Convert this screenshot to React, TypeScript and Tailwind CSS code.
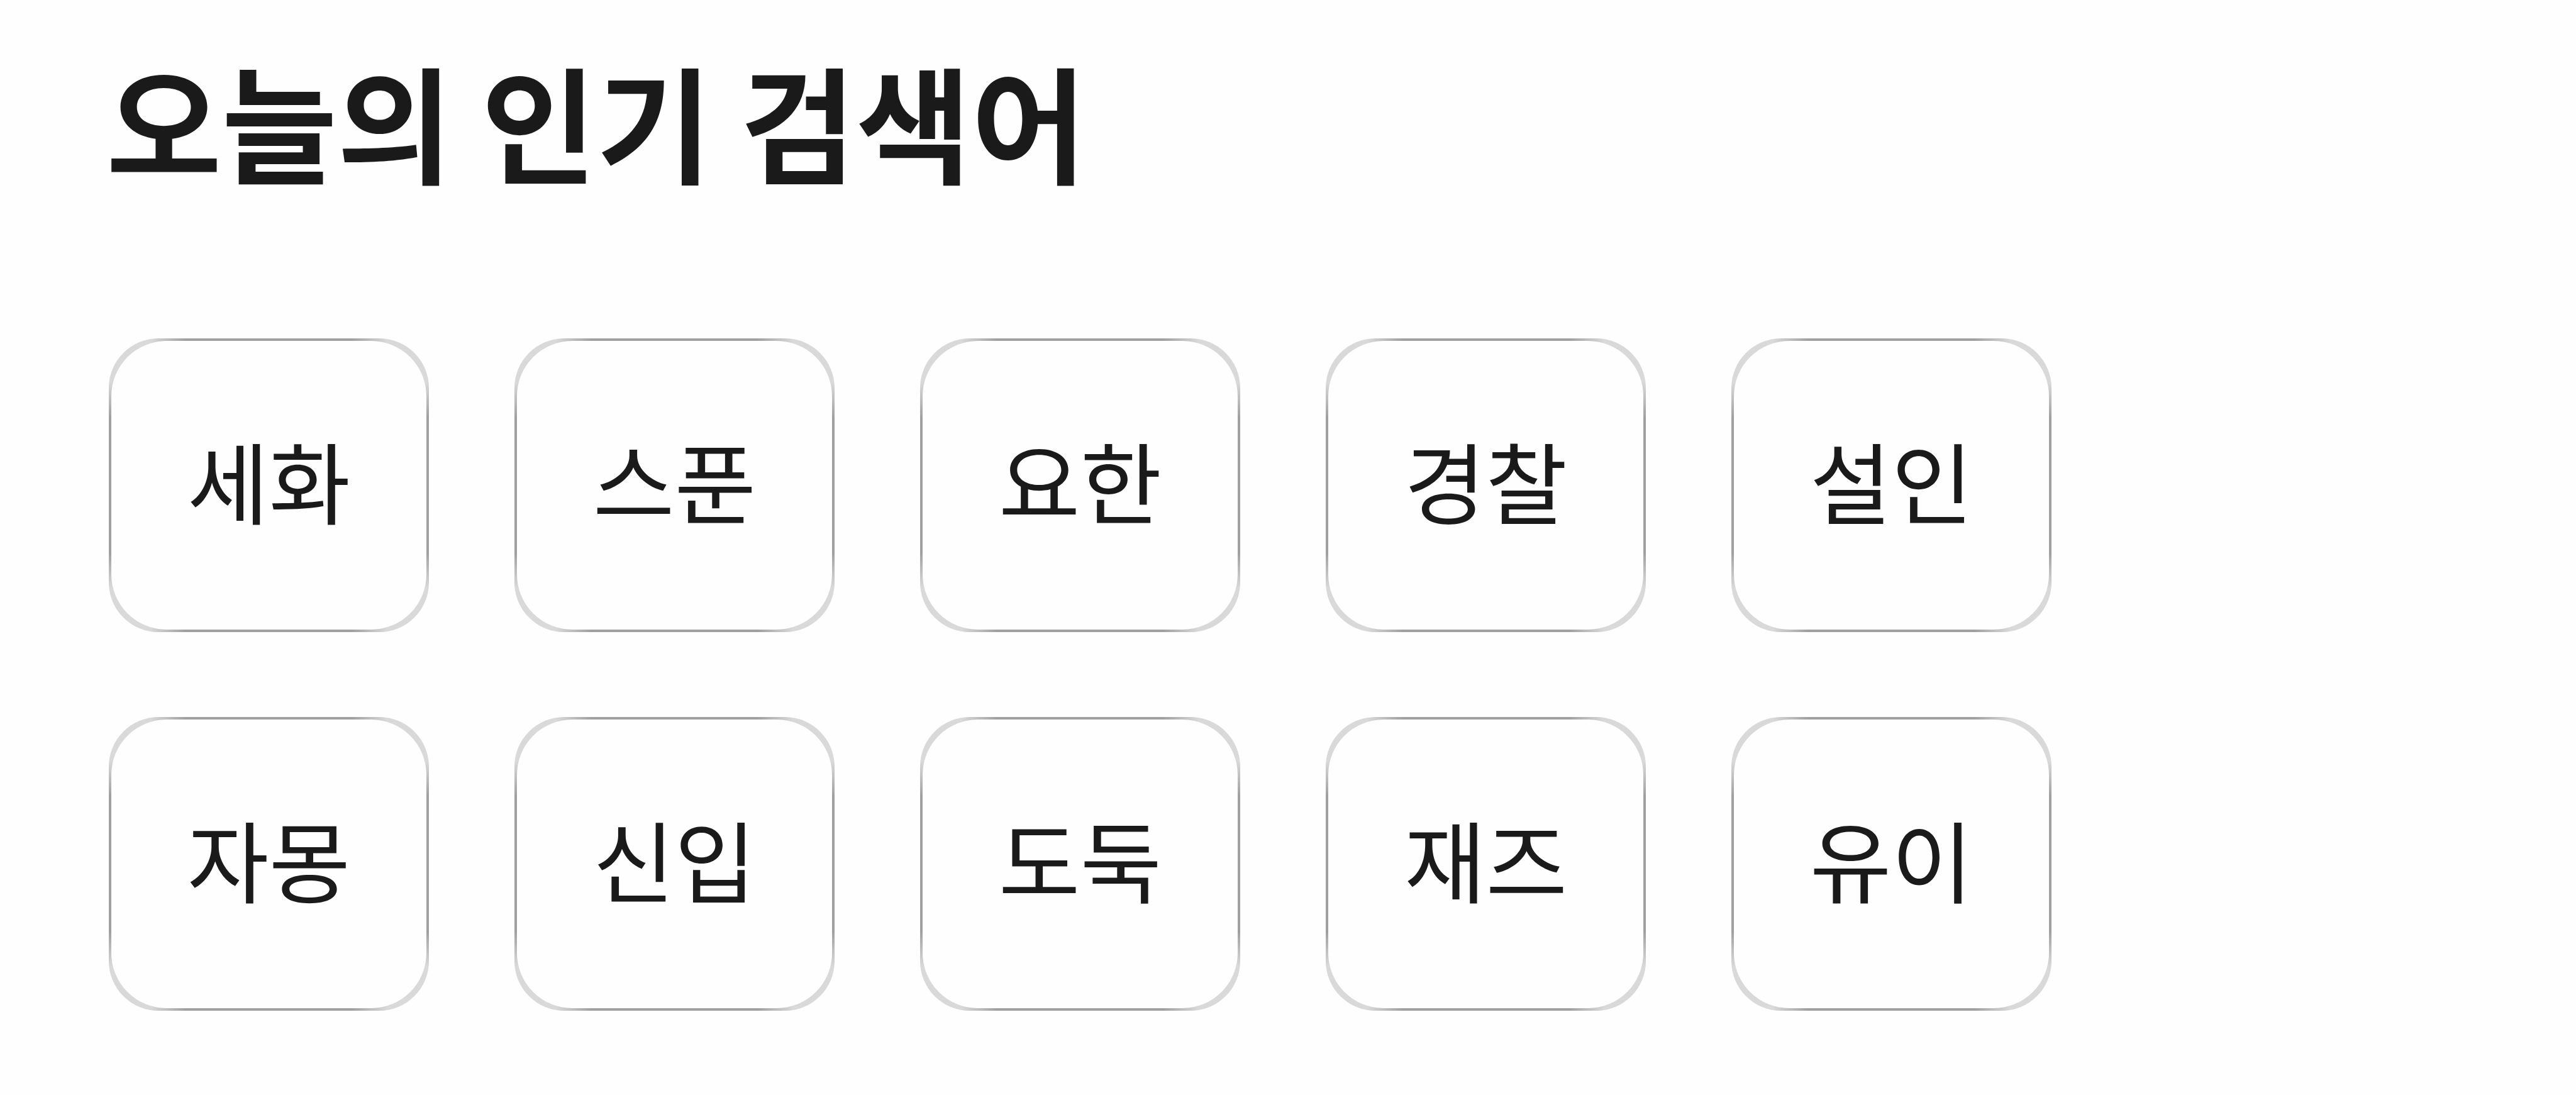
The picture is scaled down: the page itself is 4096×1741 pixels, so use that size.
const keywords = [
   ['세화', '스푼', '요한', '경찰', '설인'],
   ['자몽', '신입', '도둑', '재즈', '유이'],
];

// 검색어 하나를 보여주는 태그 컴포넌트
// 바깥 배경이 테두리 역할을 하며, 직선 구간은 모서리보다 진하게 표시됩니다.
const SearchTag = ({ keyword }: { keyword: string }) => {
   return (
      <button
         type="button"
         className="flex h-[467px] w-[509px] rounded-[79px] bg-[#d9d9d9] bg-[linear-gradient(to_right,transparent_13%,#a0a0a0_24%,#a0a0a0_76%,transparent_87%),linear-gradient(to_bottom,transparent_15%,#a0a0a0_27%,#a0a0a0_73%,transparent_85%)] p-[4px]"
      >
         <span className="flex flex-1 items-center justify-center self-stretch rounded-[88px] bg-[#fefefe] pb-[21px] text-[141px] leading-none text-[#1a1a1a]">
            {keyword}
         </span>
      </button>
   );
};

export default function App() {
   return (
      <main className="flex h-[1741px] w-[4096px] flex-col bg-[#fefefe] pt-[70px] pl-[169px] font-['Noto_Sans_CJK_KR',sans-serif] text-[#1a1a1a]">
         <h1 className="h-[468px] text-[199.5px] leading-[240px] font-bold">오늘의 인기 검색어</h1>
         <div className="flex flex-col gap-[135px] pl-1">
            {keywords.map((row) => (
               <div key={row[0]} className="flex gap-[136px]">
                  {row.map((keyword) => (
                     <SearchTag key={keyword} keyword={keyword} />
                  ))}
               </div>
            ))}
         </div>
      </main>
   );
}
